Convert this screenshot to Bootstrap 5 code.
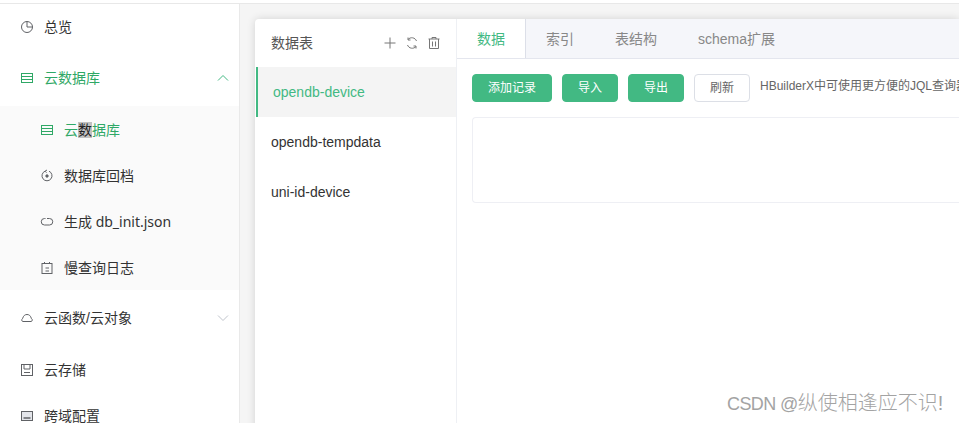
<!DOCTYPE html>
<html lang="zh-CN">
<head>
  <meta charset="UTF-8" />
  <title>云数据库</title>
  <link href="https://cdn.jsdelivr.net/npm/bootstrap@5.3.0/dist/css/bootstrap.min.css" rel="stylesheet" />
  <style>
    html, body { height: 423px; overflow: hidden; }
    body {
      font-family: "Liberation Sans", "Noto Sans CJK SC", sans-serif;
      font-size: 14px;
      color: #333;
      background: #fff;
    }
    .top-rule { height: 4px; border-bottom: 1px solid #e8e8e8; }
    .page-wrap { height: 419px; overflow: hidden; }

    /* sidebar */
    .side-menu { width: 240px; border-right: 1px solid #e9e9e9; }
    .menu-row { height: 46px; padding-left: 20px; padding-right: 10px; }
    .menu-row svg.ico { width: 14px; height: 14px; margin-right: 10px; color: #606266; flex-shrink: 0; }
    .menu-row.is-open, .menu-row.is-open svg.ico { color: #2fa866; }
    .menu-row .arrow { width: 14px; height: 14px; margin-left: auto; color: #c0c4cc; }
    .menu-row.is-open .arrow { color: #42b983; }
    .sub-menu { background: #fafafa; padding-top: 1px; height: 184px; overflow: hidden; }
    .sub-menu .menu-row { padding-left: 40px; }
    .gap-a { margin-top: 5px; margin-bottom: 5px; }
    .gap-b { margin-top: 5px; }
    .gap-c { margin-top: 6px; }
    .sel-char { background: #c1c1c1; color: #222; }
    .latin-wide { font-family: "Noto Sans", "Noto Sans CJK SC", sans-serif; margin-top: -2px; }

    /* main */
    .main-area { background: #f5f5f5; padding: 15px 0 0 15px; min-width: 0; }
    .panel-box {
      background: #fff;
      border-radius: 4px 0 0 0;
      box-shadow: 0 0 8px rgba(0, 0, 0, .14);
      height: 420px;
    }
    .table-list { width: 202px; border-right: 1px solid #eef0f4; }
    .list-head { height: 48px; padding: 0 15px 0 16px; color: #555; }
    .list-head svg { width: 14px; height: 14px; margin-left: 8px; color: #777; }
    .table-row { height: 50px; padding-left: 16px; color: #333; }
    .table-row.is-active {
      background: #f4f4f4;
      color: #42b983;
      border-left: 2px solid #42b983;
      margin-left: 1px;
      padding-left: 15px;
    }
    .tab-strip { height: 40px; background: #f5f6fa; border-bottom: 1px solid #e4e6ee; }
    .tab-item { height: 39px; color: #888; padding: 2px 21px 0 20px; }
    .tab-item.is-active {
      width: 69px;
      background: #fff;
      color: #42b983;
      border-right: 1px solid #dcdfe8;
      justify-content: center;
      padding: 2px 0 0;
    }
    .tool-row { padding: 15px 0 0 15px; white-space: nowrap; }
    .act-btn {
      height: 28px;
      font-size: 12px;
      line-height: 1;
      border-radius: 4px;
      padding: 0;
      margin-right: 10px;
      flex-shrink: 0;
      background: #42b983;
      border: 1px solid #42b983;
      color: #fff;
    }
    .act-btn.w-add { width: 80px; }
    .act-btn.w-io { width: 56px; }
    .act-btn.is-plain { background: #fff; border-color: #dcdfe6; color: #666; }
    .hint-text { font-size: 12px; color: #666; margin-top: -4px; }
    .blank-box {
      height: 86px;
      margin: 15px 0 0 15px;
      border: 1px solid #eeeff4;
      border-right: 0;
      border-radius: 4px 0 0 4px;
    }
    .watermark {
      position: absolute;
      left: 727px;
      top: 389px;
      font-size: 20px;
      font-weight: 300;
      line-height: 28px;
      color: #a3a3a3;
      white-space: nowrap;
    }
    .watermark .mark-latin { font-size: 18px; letter-spacing: -.6px; }
  </style>
</head>
<body>
  <div class="top-rule"></div>
  <div class="page-wrap d-flex">
    <!-- left menu -->
    <div class="side-menu flex-shrink-0">
      <div class="menu-row d-flex align-items-center">
        <svg class="ico" viewBox="0 0 14 14" fill="none" stroke="currentColor"><circle cx="7" cy="7" r="5.5"/><path d="M7 1.500V7h5.500"/></svg>
        <span>总览</span>
      </div>
      <div class="menu-row is-open d-flex align-items-center gap-a">
        <svg class="ico" viewBox="0 0 14 14" fill="none" stroke="currentColor"><rect x="1.500" y="2.500" width="11" height="9"/><path d="M1.500 5.500h11M1.500 8.500h11"/></svg>
        <span>云数据库</span>
        <svg class="arrow" viewBox="0 0 14 14" fill="none" stroke="currentColor"><path d="M3 9.500l5-5 5 5"/></svg>
      </div>
      <div class="sub-menu">
        <div class="menu-row is-open d-flex align-items-center">
          <svg class="ico" viewBox="0 0 14 14" fill="none" stroke="currentColor"><rect x="1.500" y="2.500" width="11" height="9"/><path d="M1.500 5.500h11M1.500 8.500h11"/></svg>
          <span>云<span class="sel-char">数</span>据库</span>
        </div>
        <div class="menu-row d-flex align-items-center">
          <svg class="ico" viewBox="0 0 14 14" fill="none" stroke="currentColor"><path d="M5 2.200A5 5 0 1 0 9 2.200M5 2.200L7 1M5 2.200l1.500 1.500"/><circle cx="7" cy="7" r="1.200" fill="currentColor"/></svg>
          <span>数据库回档</span>
        </div>
        <div class="menu-row d-flex align-items-center">
          <svg class="ico" viewBox="0 0 14 14" fill="none" stroke="currentColor"><path d="M5.500 3.500H4.500a3 3 0 0 0 0 6.500h5a3 3 0 0 0 0-6.500H7"/></svg>
          <span class="latin-wide">生成 db_init.json</span>
        </div>
        <div class="menu-row d-flex align-items-center">
          <svg class="ico" viewBox="0 0 14 14" fill="none" stroke="currentColor"><rect x="2" y="2.500" width="10" height="10"/><path d="M4.500 1v2M9.500 1v2M5.500 7h3.500M5.500 10h3.500"/></svg>
          <span>慢查询日志</span>
        </div>
      </div>
      <div class="menu-row d-flex align-items-center gap-b">
        <svg class="ico" viewBox="0 0 14 14" fill="none" stroke="currentColor"><path d="M3 10.500h8a1.500 1.500 0 0 0 .5-2.800C10.500 4.500 9 3.500 7 3.500 5 3.500 3.500 4.500 2.500 7.700A1.500 1.500 0 0 0 3 10.500z"/></svg>
        <span>云函数/云对象</span>
        <svg class="arrow" viewBox="0 0 14 14" fill="none" stroke="currentColor"><path d="M3 4.500l5 5 5-5"/></svg>
      </div>
      <div class="menu-row d-flex align-items-center gap-c">
        <svg class="ico" viewBox="0 0 14 14" fill="none" stroke="currentColor"><rect x="1.500" y="1.500" width="11" height="11"/><path d="M4 1.500v4.500h6V1.500M4 9.500h6"/></svg>
        <span>云存储</span>
      </div>
      <div class="menu-row d-flex align-items-center">
        <svg class="ico" viewBox="0 0 14 14" fill="#e3e5ea" stroke="currentColor"><rect x="1.500" y="2.500" width="11" height="9"/><path d="M3.500 9h7" stroke-width="1.500"/></svg>
        <span>跨域配置</span>
      </div>
    </div>

    <!-- main -->
    <div class="main-area flex-grow-1">
      <div class="panel-box d-flex">
        <div class="table-list flex-shrink-0">
          <div class="list-head d-flex align-items-center">
            <span class="me-auto">数据表</span>
            <svg viewBox="0 0 14 14" fill="none" stroke="currentColor"><path d="M7 1.500v11M1.500 7h11"/></svg>
            <svg viewBox="0 0 14 14" fill="none" stroke="currentColor"><path d="M11.500 5A5 5 0 0 0 3 3.500M2.500 9A5 5 0 0 0 11 10.500M3 1.500V4h2.500M11 12.500V10H8.500"/></svg>
            <svg viewBox="0 0 14 14" fill="none" stroke="currentColor"><path d="M1.500 3h11M5 3V1.500h4V3M2.500 3v9.500h9V3M5.500 5.500v5M8.500 5.500v5"/></svg>
          </div>
          <div class="table-row is-active d-flex align-items-center">opendb-device</div>
          <div class="table-row d-flex align-items-center">opendb-tempdata</div>
          <div class="table-row d-flex align-items-center">uni-id-device</div>
        </div>
        <div class="flex-grow-1 overflow-hidden">
          <div class="tab-strip d-flex">
            <div class="tab-item is-active d-flex align-items-center">数据</div>
            <div class="tab-item d-flex align-items-center">索引</div>
            <div class="tab-item d-flex align-items-center">表结构</div>
            <div class="tab-item d-flex align-items-center">schema扩展</div>
          </div>
          <div class="tool-row d-flex align-items-center">
            <button type="button" class="btn act-btn w-add">添加记录</button>
            <button type="button" class="btn act-btn w-io">导入</button>
            <button type="button" class="btn act-btn w-io">导出</button>
            <button type="button" class="btn act-btn w-io is-plain">刷新</button>
            <span class="hint-text">HBuilderX中可使用更方便的JQL查询器</span>
          </div>
          <div class="blank-box"></div>
        </div>
      </div>
    </div>
  </div>
  <div class="watermark"><span class="mark-latin">CSDN @</span>纵使相逢应不识!</div>

  <script src="https://cdn.jsdelivr.net/npm/bootstrap@5.3.0/dist/js/bootstrap.bundle.min.js"></script>
</body>
</html>
